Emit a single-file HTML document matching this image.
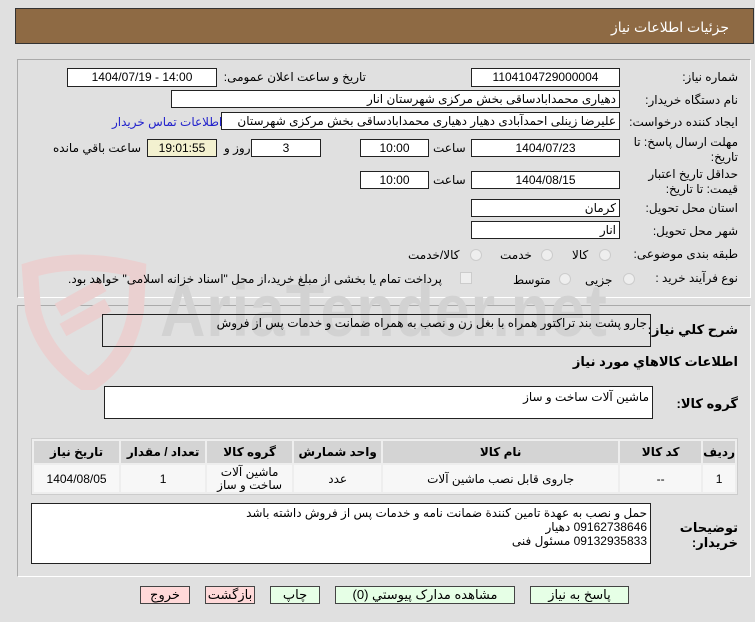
<!DOCTYPE html>
<html><head><meta charset="utf-8"><style>
*{box-sizing:border-box;margin:0;padding:0}
body{width:755px;height:622px;background:#e0e0e0;font-family:"Liberation Sans","DejaVu Sans",sans-serif;font-size:12px;color:#000;position:relative;overflow:hidden}
.a{position:absolute}
.hdr{left:15px;top:8px;width:739px;height:36px;background:#8e6a44;border:1px solid #333}
.hdr span{position:absolute;right:24px;top:10px;color:#fff;font-size:14px}
.pan{border:1px solid #aaa;border-right-color:#fff;border-bottom-color:#fff}
.box{background:#fff;border:1px solid #222;text-align:center;line-height:16px;white-space:nowrap;overflow:hidden}
.l{direction:rtl;white-space:nowrap}
.r{text-align:right;padding-right:3px}
.rad{width:12px;height:12px;border-radius:50%;border:1px solid #ccc;background:#eee}
table{border-collapse:separate;border-spacing:2px;background:#eee;border:1px solid #ccc}
th{background:#d4d4d4;font-weight:bold;height:22px;font-size:12px}
td{background:#f7f7f7;text-align:center;height:27px;font-size:12px}
.btn{border:1px solid #444;text-align:center;line-height:16px;font-size:13px}
.g{background:#e6ffe6}.p{background:#ffd9d9}
</style></head><body>
<div class="a hdr"><span>جزئیات اطلاعات نیاز</span></div>
<div class="a pan" style="left:17px;top:59px;width:734px;height:239px"></div>
<div class="a pan" style="left:17px;top:305px;width:734px;height:272px"></div>
<!-- watermark -->
<svg class="a" style="left:18px;top:250px" width="130" height="140"><path d="M12 20 Q60 5 120 20 L118 60 Q110 110 70 135 Q25 105 15 60 Z" fill="none" stroke="#ead0d0" stroke-width="16"/><path d="M40 60 L85 35 M45 80 L90 55" stroke="#ead0d0" stroke-width="14"/></svg>
<div class="a" style="left:160px;top:268px;font-size:74px;font-weight:bold;color:#d2d2d2;letter-spacing:1px;transform:scaleX(0.85);transform-origin:left">AriaTender.net</div>

<div class="a l" style="right:17px;top:70px">شماره نیاز:</div>
<div class="a box" style="left:471px;top:68px;width:149px;height:19px">1104104729000004</div>
<div class="a l" style="right:389px;top:70px">تاریخ و ساعت اعلان عمومی:</div>
<div class="a box" style="left:67px;top:68px;width:150px;height:19px">1404/07/19 - 14:00</div>

<div class="a l" style="right:17px;top:93px">نام دستگاه خریدار:</div>
<div class="a box r l" style="left:171px;top:90px;width:449px;height:18px">دهیاری محمدابادساقی بخش مرکزی شهرستان انار</div>

<div class="a l" style="right:17px;top:115px">ایجاد کننده درخواست:</div>
<div class="a box r l" style="left:221px;top:112px;width:399px;height:18px">علیرضا زینلی احمدآبادی دهیار دهیاری محمدابادساقی بخش مرکزی شهرستان</div>
<div class="a l" style="left:112px;top:115px;color:#2222cc">اطلاعات تماس خریدار</div>

<div class="a l" style="right:17px;top:135px;line-height:15px;text-align:right">مهلت ارسال پاسخ: تا<br>تاریخ:</div>
<div class="a box" style="left:471px;top:139px;width:149px;height:18px">1404/07/23</div>
<div class="a l" style="left:433px;top:141px">ساعت</div>
<div class="a box" style="left:360px;top:139px;width:69px;height:18px">10:00</div>
<div class="a box" style="left:251px;top:139px;width:70px;height:18px">3</div>
<div class="a l" style="left:224px;top:141px">روز و</div>
<div class="a box" style="left:147px;top:139px;width:70px;height:18px;background:#f3f1d0">19:01:55</div>
<div class="a l" style="left:53px;top:141px">ساعت باقي مانده</div>

<div class="a l" style="right:17px;top:167px;line-height:15px;text-align:right">حداقل تاریخ اعتبار<br>قیمت: تا تاریخ:</div>
<div class="a box" style="left:471px;top:171px;width:149px;height:18px">1404/08/15</div>
<div class="a l" style="left:433px;top:173px">ساعت</div>
<div class="a box" style="left:360px;top:171px;width:69px;height:18px">10:00</div>

<div class="a l" style="right:17px;top:201px">استان محل تحویل:</div>
<div class="a box r" style="left:471px;top:199px;width:149px;height:18px">کرمان</div>
<div class="a l" style="right:17px;top:224px">شهر محل تحویل:</div>
<div class="a box r" style="left:471px;top:221px;width:149px;height:18px">انار</div>

<div class="a l" style="right:17px;top:247px">طبقه بندی موضوعی:</div>
<div class="a rad" style="left:599px;top:249px"></div><div class="a l" style="left:572px;top:248px">کالا</div>
<div class="a rad" style="left:541px;top:249px"></div><div class="a l" style="left:500px;top:248px">خدمت</div>
<div class="a rad" style="left:470px;top:249px"></div><div class="a l" style="left:408px;top:248px">کالا/خدمت</div>

<div class="a l" style="right:17px;top:271px">نوع فرآیند خرید :</div>
<div class="a rad" style="left:623px;top:273px"></div><div class="a l" style="left:585px;top:273px">جزیی</div>
<div class="a rad" style="left:559px;top:273px"></div><div class="a l" style="left:513px;top:273px">متوسط</div>
<div class="a" style="left:460px;top:272px;width:12px;height:12px;border:1px solid #ccc;background:#eee"></div>
<div class="a l" style="left:68px;top:272px">پرداخت تمام یا بخشی از مبلغ خرید،از محل "اسناد خزانه اسلامی" خواهد بود.</div>

<div class="a l" style="right:17px;top:322px;font-weight:bold;font-size:13px">شرح کلي نیاز:</div>
<div class="a box r l" style="left:102px;top:314px;width:549px;height:33px;text-align:right;background:transparent">جارو پشت بند تراکتور همراه با بغل زن و نصب به همراه ضمانت و خدمات پس از فروش</div>
<div class="a l" style="right:17px;top:354px;font-weight:bold;font-size:13px">اطلاعات کالاهاي مورد نیاز</div>
<div class="a l" style="right:17px;top:396px;font-weight:bold;font-size:13px">گروه کالا:</div>
<div class="a box r" style="left:104px;top:386px;width:549px;height:33px;text-align:right;padding-top:2px">ماشین آلات ساخت و ساز</div>

<table class="a" style="left:31px;top:438px;width:707px;direction:rtl">
<tr><th style="width:27px">ردیف</th><th style="width:81px">کد کالا</th><th style="width:235px">نام کالا</th><th style="width:87px">واحد شمارش</th><th style="width:85px">گروه کالا</th><th style="width:84px">تعداد / مقدار</th><th>تاریخ نیاز</th></tr>
<tr><td>1</td><td>--</td><td>جاروی قابل نصب ماشین آلات</td><td>عدد</td><td style="line-height:13px">ماشین آلات<br>ساخت و ساز</td><td>1</td><td>1404/08/05</td></tr>
</table>

<div class="a l" style="right:17px;top:520px;font-weight:bold;font-size:13px;line-height:15px;text-align:right">توضیحات<br>خریدار:</div>
<div class="a box l" style="left:31px;top:503px;width:620px;height:61px;text-align:right;padding-right:3px;line-height:14px;padding-top:2px">حمل و نصب به عهدة تامین کنندة ضمانت نامه و خدمات پس از فروش داشته باشد<br>09162738646 دهیار<br>09132935833 مسئول فنی</div>

<div class="a btn g l" style="left:530px;top:586px;width:99px;height:18px">پاسخ به نیاز</div>
<div class="a btn g l" style="left:335px;top:586px;width:180px;height:18px">مشاهده مدارک پیوستي (0)</div>
<div class="a btn g" style="left:270px;top:586px;width:50px;height:18px">چاپ</div>
<div class="a btn p" style="left:205px;top:586px;width:50px;height:18px">بازگشت</div>
<div class="a btn p" style="left:140px;top:586px;width:50px;height:18px">خروج</div>
</body></html>
